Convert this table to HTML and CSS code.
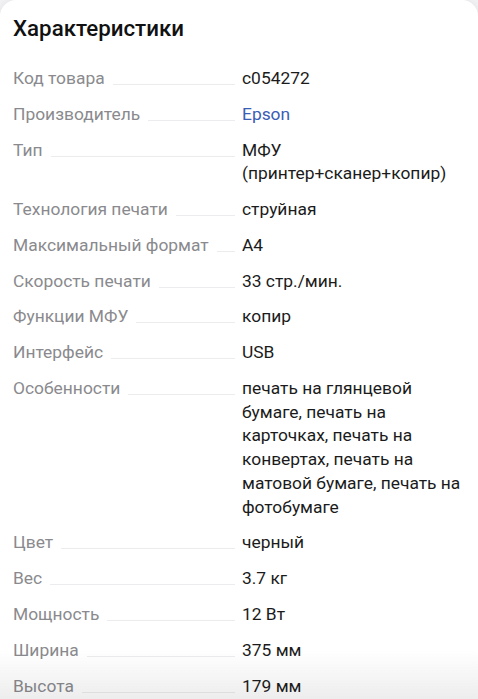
FILE: index.html
```html
<!DOCTYPE html>
<html lang="ru">
<head>
<meta charset="utf-8">
<link rel="stylesheet" href="styles.css">
</head>
<body>
<div class="card">
  <h2 class="title">Характеристики</h2>
  <div class="specs">
    <div class="row"><div class="label"><span>Код товара</span><i class="lead"></i></div><div class="value">c054272</div></div>
    <div class="row"><div class="label"><span>Производитель</span><i class="lead"></i></div><div class="value link">Epson</div></div>
    <div class="row"><div class="label"><span>Тип</span><i class="lead"></i></div><div class="value">МФУ<br>(принтер+сканер+копир)</div></div>
    <div class="row"><div class="label"><span>Технология печати</span><i class="lead"></i></div><div class="value">струйная</div></div>
    <div class="row"><div class="label"><span>Максимальный формат</span><i class="lead"></i></div><div class="value">A4</div></div>
    <div class="row"><div class="label"><span>Скорость печати</span><i class="lead"></i></div><div class="value">33 стр./мин.</div></div>
    <div class="row"><div class="label"><span>Функции МФУ</span><i class="lead"></i></div><div class="value">копир</div></div>
    <div class="row"><div class="label"><span>Интерфейс</span><i class="lead"></i></div><div class="value">USB</div></div>
    <div class="row"><div class="label"><span>Особенности</span><i class="lead"></i></div><div class="value">печать на глянцевой бумаге, печать на карточках, печать на конвертах, печать на матовой бумаге, печать на фотобумаге</div></div>
    <div class="row"><div class="label"><span>Цвет</span><i class="lead"></i></div><div class="value">черный</div></div>
    <div class="row"><div class="label"><span>Вес</span><i class="lead"></i></div><div class="value">3.7 кг</div></div>
    <div class="row"><div class="label"><span>Мощность</span><i class="lead"></i></div><div class="value">12 Вт</div></div>
    <div class="row"><div class="label"><span>Ширина</span><i class="lead"></i></div><div class="value">375 мм</div></div>
    <div class="row"><div class="label"><span>Высота</span><i class="lead"></i></div><div class="value">179 мм</div></div>
  </div>
</div>
<div class="fade"></div>
</body>
</html>
```

FILE: styles.css
```css
html, body {
  margin: 0;
  padding: 0;
}
body {
  background: #f1f1f3;
  font-family: Roboto, "Noto Sans", Arial, sans-serif;
  overflow: hidden;
  height: 699px;
}
.card {
  background: #fff;
  border-radius: 16px 16px 0 0;
  box-shadow: 0 0 6px rgba(0,0,0,0.06);
  padding: 14px 13px 40px 13px;
  min-height: 760px;
}
.title {
  margin: 0;
  font-size: 22.3px;
  line-height: 28px;
  font-weight: 500;
  color: #111;
}
.specs {
  margin-top: 25px;
  display: flex;
  flex-direction: column;
  gap: 12.1px;
}
.row {
  display: grid;
  grid-template-columns: 229px 1fr;
  font-size: 17.4px;
  line-height: 23.7px;
}
.label {
  display: flex;
  color: #8a8a8e;
}
.label span {
  white-space: nowrap;
}
.lead {
  flex: 1;
  height: 0;
  margin: 17px 7px 0 8px;
  border-bottom: 1px solid #ececee;
}
.value {
  color: #1b1b1b;
}
.link {
  color: #3a5db5;
}
.fade {
  position: fixed;
  left: 0;
  right: 0;
  bottom: 0;
  height: 48px;
  pointer-events: none;
  background: linear-gradient(to bottom, rgba(255,255,255,0), #ededed);
  mix-blend-mode: multiply;
}
```
